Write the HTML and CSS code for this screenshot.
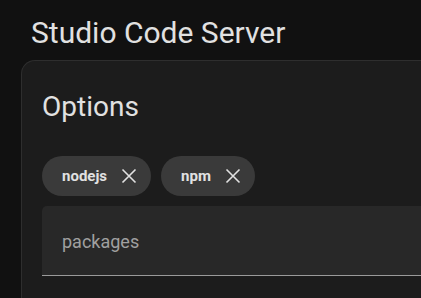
FILE: index.html
```html
<!DOCTYPE html>
<html lang="en">
  <head>
    <meta charset="UTF-8" />
    <title>Studio Code Server</title>
    <link rel="stylesheet" href="styles.css">
  </head>
  <body>
    <h1 class="page-title">Studio Code Server</h1>

    <div class="card">
      <h2 class="card-title">Options</h2>

      <div class="chip-set">
        <div class="chip">
          <span class="chip-label">nodejs</span>
          <svg class="chip-remove" viewBox="0 0 24 24"><path d="M5.5 5.5L18.5 18.5M18.5 5.5L5.5 18.5" /></svg>
        </div>
        <div class="chip">
          <span class="chip-label">npm</span>
          <svg class="chip-remove" viewBox="0 0 24 24"><path d="M5.5 5.5L18.5 18.5M18.5 5.5L5.5 18.5" /></svg>
        </div>
      </div>

      <div class="text-field">
        <span class="text-field-label">packages</span>
      </div>
    </div>
  </body>
</html>
```

FILE: styles.css
```css
body {
  margin: 0;
  background-color: #111111;
  color: #e1e1e1;
  font-family: Roboto, "Noto Sans", sans-serif;
  overflow: hidden;
  height: 298px;
}

.page-title {
  margin: 0;
  padding: 15px 0 0 31px;
  height: 60px;
  box-sizing: border-box;
  font-size: 30px;
  font-weight: 400;
  line-height: 36px;
}

.card {
  margin-left: 21px;
  width: 420px;
  height: 238px;
  box-sizing: border-box;
  background-color: #1c1c1c;
  border: 1px solid #2e2e2e;
  border-right: none;
  border-bottom: none;
  border-radius: 14px 0 0 0;
  padding: 26px 0 0 20px;
}

.card-title {
  margin: 0 0 29px 0;
  font-size: 28px;
  font-weight: 400;
  line-height: 40px;
}

.chip-set {
  display: flex;
  gap: 10px;
  margin-bottom: 10px;
}

.chip {
  display: flex;
  align-items: center;
  height: 40px;
  padding: 0 10px 0 20px;
  background-color: #3a3a3a;
  border-radius: 20px;
}

.chip-label {
  font-size: 15px;
  font-weight: 700;
  margin-right: 10px;
}

.chip-remove {
  width: 24px;
  height: 24px;
  fill: none;
  stroke: #e1e1e1;
  stroke-width: 1.6;
}

.text-field {
  height: 70px;
  box-sizing: border-box;
  background-color: #282828;
  border-radius: 5px 0 0 0;
  border-bottom: 1px solid #9a9a9a;
  padding: 2px 20px 0 20px;
  display: flex;
  align-items: center;
}

.text-field-label {
  font-size: 18px;
  color: #a0a0a0;
}
```
